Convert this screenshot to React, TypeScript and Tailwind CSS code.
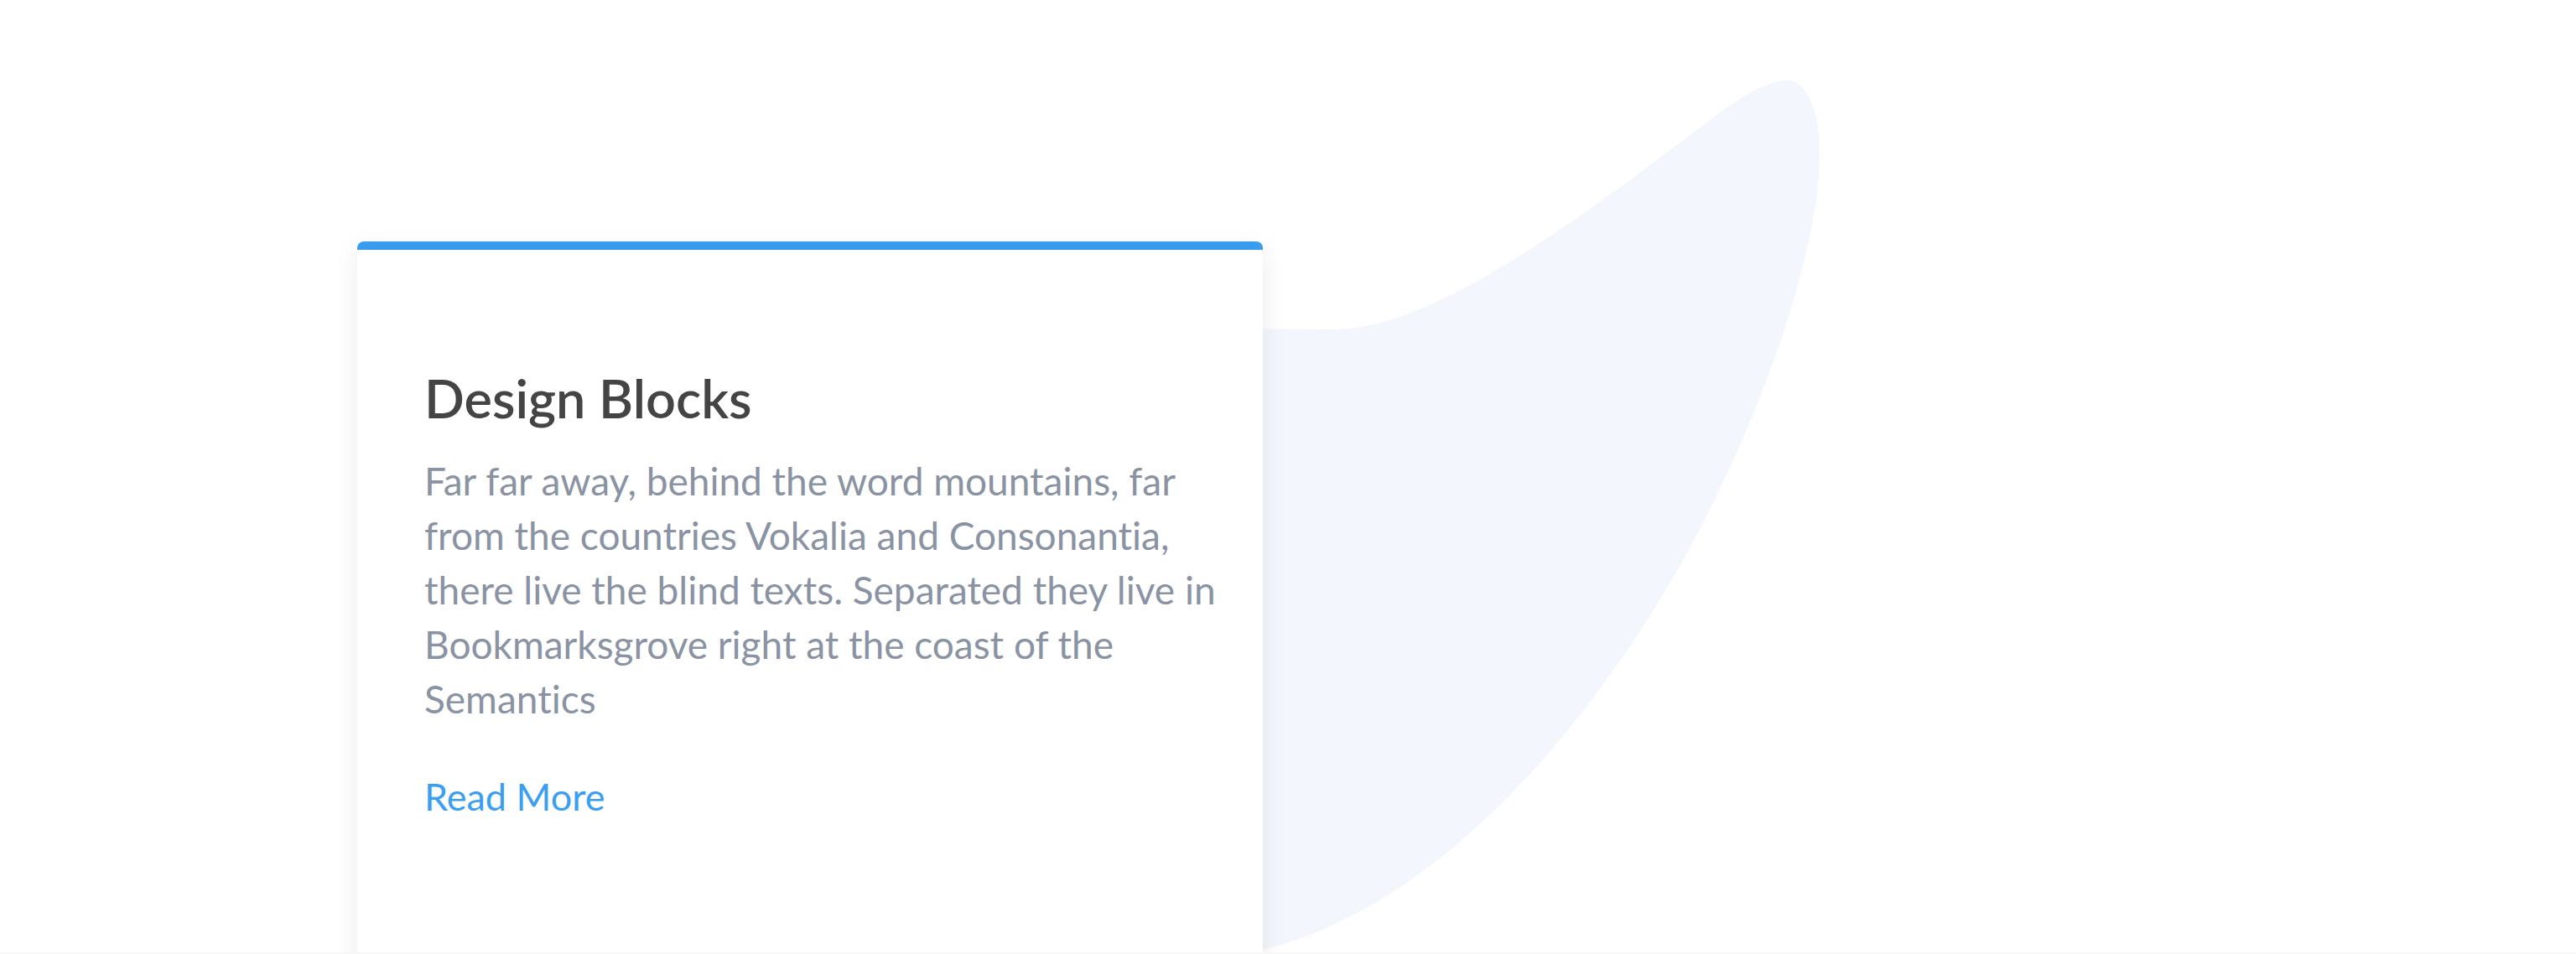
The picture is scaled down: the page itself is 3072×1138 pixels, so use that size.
import React from 'react'

const body =
	'Far far away, behind the word mountains, far from the countries Vokalia and Consonantia, there live the blind texts. Separated they live in Bookmarksgrove right at the coast of the Semantics'

function Blob() {
	return (
		<svg
			className="absolute inset-0 h-full w-full"
			viewBox="0 0 3072 1136"
			preserveAspectRatio="none"
		>
			<path
				d="M 1300 391 L 1592 393 C 1700 393, 1860 280, 2030 150 C 2080 112, 2110 95, 2133 96 C 2160 97, 2172 150, 2170 191 C 2166 300, 2110 480, 2009 665 C 1900 860, 1720 1080, 1506 1133 L 1300 1136 Z"
				fill="#f3f6fd"
			/>
		</svg>
	)
}

export default function App() {
	return (
		<main className="min-h-screen bg-white font-['Lato','Liberation_Sans',sans-serif] [font-variant-ligatures:none]">
			<section className="relative h-[1136px] overflow-hidden">
				<Blob />
				<div className="relative ml-[426px] mt-[288px] w-[1080px]">
					<div className="h-[10px] rounded-t-[8px] bg-[#3a9ff2]" />
					<div className="flex h-[900px] flex-col bg-white pl-[80px] pr-[46px] pt-[139px] shadow-[0_0_30px_rgba(0,0,0,0.08)]">
						<h2 className="text-[63px] font-semibold leading-[1.2] text-[#444444]">Design Blocks</h2>
						<p className="mt-[28px] text-[46px] leading-[65px] text-[#8a93a3]">{body}</p>
						<a href="#" className="mt-[57px] self-start text-[45px] leading-[1.2] text-[#3a9ff2]">
							Read More
						</a>
					</div>
				</div>
			</section>
			<div className="h-[2px] bg-[#f7f7f7]" />
		</main>
	)
}
